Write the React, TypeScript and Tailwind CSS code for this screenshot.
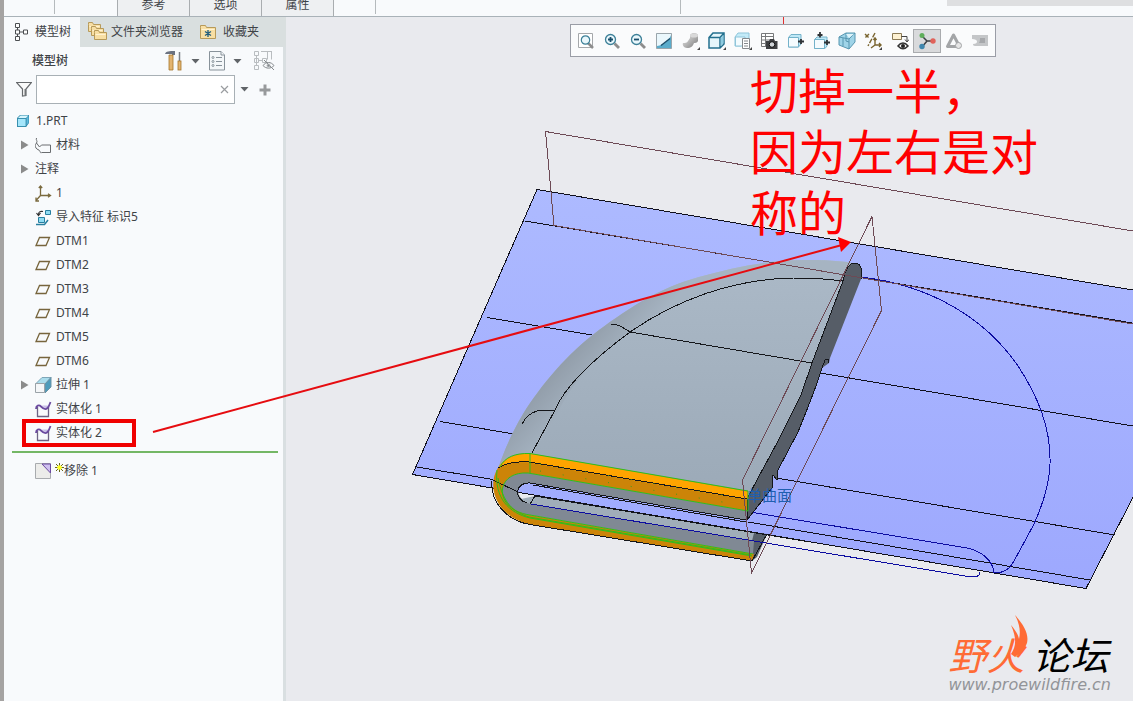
import type { ReactNode } from 'react'

const UI_FONT = "font-['Noto_Sans','Noto_Sans_CJK_SC',sans-serif]"

function PartIcon() {
  return (
    <svg width="14" height="14" viewBox="0 0 14 14">
      <path d="M1 4 4 1h9v8l-3 4H1z" fill="#2b86a8" />
      <path d="M1.500 4.500h8.500v8h-8.500z" fill="#a5e6fb" stroke="#2f86a6" strokeWidth=".8" />
      <path d="M2 4 4.500 1.500h8L10 4z" fill="#d6f5fd" />
      <path d="M10.500 4.500 12.500 2v6.500l-2 3z" fill="#5fb9dc" />
    </svg>
  )
}

function MaterialIcon() {
  return (
    <svg width="17" height="17" viewBox="0 0 17 17" fill="none" stroke="#6a6d70">
      <path d="M1.500 1C.5 3 3 4 1.500 6S0 9 1 11s3 1 4 3.500 1 1 2 1h8.500v-7.500H6.500L4.500 10" />
      <path d="M1.500 6 4.500 10" />
    </svg>
  )
}

function CsysIcon() {
  return (
    <svg width="17" height="17" viewBox="0 0 17 17" fill="none" stroke="#7a6a3e" strokeWidth="1.3">
      <path d="M5.500 1v9.500H15M5.500 10.500 1 15.500M3.800 3l1.700-2 1.700 2M13 8.800l2.500 1.700-2.500 1.700M1 12.500V16h3" />
    </svg>
  )
}

function ImportIcon() {
  return (
    <svg width="17" height="17" viewBox="0 0 17 17">
      <path d="M10.500 1.500h5v4h-5z" fill="#8fdcf3" stroke="#287fa0" />
      <path d="M3.500 8.500h6v5h-6z" fill="#8fdcf3" stroke="#287fa0" />
      <path d="M1 15.500h8.500L13 11" fill="none" stroke="#287fa0" strokeWidth="1.500" />
      <path d="M8 2.500C5 2 3.500 3 3.500 5.500M1.500 4l2 2.500 2-2.500" fill="none" stroke="#333" strokeWidth="1.200" />
    </svg>
  )
}

function DatumIcon() {
  return (
    <svg width="17" height="17" viewBox="0 0 17 17" fill="none" stroke="#77653d" strokeWidth="1.300">
      <path d="M4.500 4.500h10l-3.500 8H1z" />
    </svg>
  )
}

function ExtrudeIcon() {
  return (
    <svg width="17" height="17" viewBox="0 0 17 17">
      <path d="M.5 7 7 .5h9L10 7z" fill="#a9dcec" stroke="#7fa6b8" />
      <path d="M10 7 16 .5V10l-6 6z" fill="#4c9bbb" stroke="#6d93a6" />
      <path d="M.5 6.500h9v9h-9z" fill="#f4f6f8" stroke="#9aa2a8" />
    </svg>
  )
}

function SolidifyIcon() {
  return (
    <svg width="17" height="17" viewBox="0 0 17 17">
      <path d="M7 4.500h7l-3 3.500z" fill="#c9bfe8" />
      <path d="M2.500 6v9.500h11V6" fill="none" stroke="#6d6384" strokeWidth="1.300" />
      <path d="M1 8C1 4.500 4 3.500 6 5.500S10 9 12 7.500 14.500 4 15.500 1" fill="none" stroke="#6b4aa0" strokeWidth="1.800" />
    </svg>
  )
}

function RemoveIcon() {
  return (
    <svg width="17" height="17" viewBox="0 0 17 17">
      <path d="M.5.5h15v15H.5z" fill="#ececea" stroke="#a8abae" />
      <path d="M7 1h8.500v9z" fill="#cfc0f0" stroke="#6b4aa0" />
    </svg>
  )
}

type TreeNode = { id: string; label: string; icon?: ReactNode; expandable?: boolean; marked?: boolean }

const NODES: TreeNode[] = [
  { id: 'material', label: '材料', icon: <MaterialIcon />, expandable: true },
  { id: 'notes', label: '注释', expandable: true },
  { id: 'csys', label: '1', icon: <CsysIcon /> },
  { id: 'import', label: '导入特征 标识5', icon: <ImportIcon /> },
  { id: 'dtm1', label: 'DTM1', icon: <DatumIcon /> },
  { id: 'dtm2', label: 'DTM2', icon: <DatumIcon /> },
  { id: 'dtm3', label: 'DTM3', icon: <DatumIcon /> },
  { id: 'dtm4', label: 'DTM4', icon: <DatumIcon /> },
  { id: 'dtm5', label: 'DTM5', icon: <DatumIcon /> },
  { id: 'dtm6', label: 'DTM6', icon: <DatumIcon /> },
  { id: 'extrude', label: '拉伸 1', icon: <ExtrudeIcon />, expandable: true },
  { id: 'solid1', label: '实体化 1', icon: <SolidifyIcon /> },
  { id: 'solid2', label: '实体化 2', icon: <SolidifyIcon />, marked: true },
]

function TreeRow({ node }: { node: TreeNode }) {
  return (
    <li className="relative flex h-6 items-center pl-[15px]">
      <span className="flex w-4 shrink-0">
        {node.expandable && (
          <button aria-label="展开" className="ml-0.5">
            <svg width="8" height="10" viewBox="0 0 8 10"><path d="M0 0.500 7.500 5 0 9.500z" fill="#8b8b8b" /></svg>
          </button>
        )}
      </span>
      {node.icon && <span className="mr-1 w-[17px] shrink-0">{node.icon}</span>}
      {node.label}
      {node.marked && <span className="absolute -top-0.5 left-[18px] h-7 w-[114px] border-4 border-[#f00000]" />}
    </li>
  )
}

function Caret() {
  return <svg width="9" height="5" viewBox="0 0 9 5"><path d="M0.500 0h8L4.500 4.500z" fill="#606468" /></svg>
}

function Folder({ x, y, w = 12, h = 9 }: { x: number; y: number; w?: number; h?: number }) {
  return (
    <g transform={`translate(${x} ${y})`} stroke="#b79a5a" fill="#f8dfa4">
      <path d={`M.5 2.500V.5h${w / 3}l1 2h${w - w / 3 - 1}v${h - 2}H.5z`} />
      <path d={`M1.500 4h${w - 2}v1h-${w - 2}z`} fill="#fff3d2" stroke="none" />
    </g>
  )
}

function Sidebar() {
  return (
    <aside className="flex w-[282px] shrink-0 flex-col border-r-[3px] border-[#d9dfe1] bg-[#f8fafc]">
      <div className="-mr-[3px] flex h-[30px] bg-[#d9dfdf]" role="tablist">
        <button role="tab" aria-selected="true" className="flex w-[76px] items-center gap-1 bg-[#f8fafc] pl-2.5">
          <svg width="17" height="20" viewBox="0 0 17 20" fill="#fff" stroke="#4c4f52">
            <path d="M3.500 6v8M6 10h5" />
            <path d="M1.500 1.500h4v4h-4zM1.500 8h4v4h-4zM1.500 14.500h4v4h-4zM9.500 8h4v4h-4z" />
          </svg>
          模型树
        </button>
        <button role="tab" aria-selected="false" className="flex items-center gap-1 pl-2">
          <svg width="19" height="20" viewBox="0 0 19 20">
            <Folder x={0} y={0} />
            <Folder x={3} y={4} />
            <Folder x={6} y={8} />
          </svg>
          文件夹浏览器
        </button>
        <button role="tab" aria-selected="false" className="flex items-center gap-1.5 pl-[17px]">
          <svg width="17" height="16" viewBox="0 0 17 16">
            <Folder x={0} y={1} w={15} h={13} />
            <path d="M8 6v7M5 7.500l6 4M11 7.500l-6 4" fill="none" stroke="#1e5c7c" strokeWidth="1.300" />
          </svg>
          收藏夹
        </button>
      </div>

      <div className="flex h-7 items-center pl-7">
        <h2 className="grow font-medium">模型树</h2>
        <button aria-label="设置" className="mr-2">
          <svg width="18" height="20" viewBox="0 0 18 20">
            <path d="M0 3C1 0 4 0 10 0v4H7V3H3z" fill="#6b7280" />
            <path d="M4 4h4v15H4z" fill="#e3b470" stroke="#a6762c" strokeWidth=".8" />
            <path d="M14.500 1v10" stroke="#7a7f85" strokeWidth="1.500" />
            <rect x="13" y="10" width="3" height="9" fill="#e3b470" stroke="#a6762c" strokeWidth=".8" />
          </svg>
        </button>
        <button aria-label="设置选项" className="mr-2"><Caret /></button>
        <button aria-label="显示" className="mr-2">
          <svg width="17" height="20" viewBox="0 0 17 20" fill="#f4f7f9" stroke="#88929a">
            <path d="M1.500.5H13L16.500 4v15h-15z" />
            <path d="M13 .5V4h3.500" />
            <path d="M8 6.500h6M8 10.500h6M8 14.500h6" />
            <circle cx="5" cy="6.500" r="1" /><circle cx="5" cy="10.500" r="1" /><circle cx="5" cy="14.500" r="1" />
          </svg>
        </button>
        <button aria-label="显示选项" className="mr-3"><Caret /></button>
        <button aria-label="隐藏" className="mr-2">
          <svg width="21" height="20" viewBox="0 0 21 20" fill="none" stroke="#b9bdc0">
            <path d="M.5.5h4v4h-4zM.5 7.500h4v4h-4zM.5 14.500h4v4h-4zM8.500 7.500h4v4h-4zM2.500 5v10M5 9.500h4M7 .5h11M13.500.5v8M17.500.5v8" />
            <path d="M9 14.500c3-4 8-4 11 0-3 3.500-8 3.500-11 0zM10 9l10 10" stroke="#85898c" />
            <circle cx="14.500" cy="14.500" r="1.500" fill="#85898c" />
          </svg>
        </button>
      </div>

      <div className="flex items-center pl-3">
        <svg width="16" height="15" viewBox="0 0 16 15" className="mr-1">
          <path d="M.5.5h15L10 7v6.500L6.500 14V7z" fill="#fafafa" stroke="#66696c" strokeWidth="1.200" />
          <path d="M8.500 7h1.500v6.500H8.500z" fill="#6f7275" />
        </svg>
        <div className="flex h-[29px] w-[199px] items-center border border-[#a8b0b5] bg-white pr-[5px]">
          <input aria-label="过滤" className="min-w-0 grow bg-transparent px-2 outline-none" />
          <button aria-label="清除">
            <svg width="9" height="9" viewBox="0 0 9 9"><path d="M1 1l7 7M8 1 1 8" stroke="#9a9da0" strokeWidth="1.200" /></svg>
          </button>
        </div>
        <button aria-label="过滤选项" className="ml-[5px]"><Caret /></button>
        <button aria-label="添加" className="ml-2.5">
          <svg width="12" height="12" viewBox="0 0 12 12"><path d="M6 .5v11M.5 6h11" stroke="#97999b" strokeWidth="3" /></svg>
        </button>
      </div>

      <ul className="pt-[5px]">
        <li className="flex h-6 items-center gap-1.5 pl-3">
          <PartIcon />
          1.PRT
        </li>
        {NODES.map((n) => <TreeRow key={n.id} node={n} />)}
      </ul>
      <div className="mt-1.5 mr-[5px] mb-1.5 ml-2 h-0.5 bg-[#74b765]" />
      <div className="flex h-6 items-center pl-[31px]">
        <RemoveIcon />
        <svg width="9" height="9" viewBox="0 0 9 9" className="mb-2 ml-[3px]">
          <path d="M4.500 0v9M0 4.500h9M1 1l7 7M8 1 1 8" stroke="#66661c" />
          <circle cx="4.500" cy="4.500" r="2.300" fill="#ffff20" />
        </svg>
        移除 1
      </div>
    </aside>
  )
}

function Lens({ children }: { children?: ReactNode }) {
  return (
    <>
      <path d="M11.500 11.500 16 16" stroke="#8d8d8d" strokeWidth="2.800" />
      <circle cx="7.500" cy="7.500" r="5" fill="#e9f7fc" stroke="#3d8098" strokeWidth="1.300" />
      {children}
    </>
  )
}

const Corner = () => <path d="M18 15v3h-3z" fill="#444" />

const TOOLS: { name: string; art: ReactNode; active?: boolean }[] = [
  { name: '重新调整', art: <><path d="M1.500 1.500h14v14h-14z" fill="#fff" stroke="#a5a8ab" /><path d="m11 11 5 5" stroke="#8d8d8d" strokeWidth="2.500" /><circle cx="8.500" cy="8" r="4.200" fill="#e9f7fc" stroke="#3d8098" strokeWidth="1.200" /></> },
  { name: '放大', art: <Lens><path d="M7.500 5v5M5 7.500h5" stroke="#1a4f6b" strokeWidth="1.800" /></Lens> },
  { name: '缩小', art: <Lens><path d="M5 7.500h5" stroke="#1a4f6b" strokeWidth="1.800" /></Lens> },
  { name: '重画', art: <><path d="M1.500 1.500h15v15h-15z" fill="#5aaccb" stroke="#9aa5ab" /><path d="M2 2h14v1C15 7 9 13 2 14z" fill="#eaf7fc" /><path d="M6 13.500 15 6.500" stroke="#1c4f6b" strokeWidth="1.500" /></> },
  { name: '渲染', art: <><path d="M8 6V3c2-3 7-2 8 0v6c-1 2-3 2-4 2-1 3-3 5-7 5-3 0-5-3-4-5 2 0 4 0 5-2" fill="url(#metal)" /><ellipse cx="12" cy="3.500" rx="4" ry="2" fill="#d9d9d9" /><Corner /></> },
  { name: '显示样式', art: <><path d="M1 5.500 5 1h11v11l-4 4H1zM1 5.500h11V16M12 5.500 16 1" fill="#e5f6fb" stroke="#23708e" strokeWidth="1.500" /><path d="M12.700 6 15.500 3v8l-2.800 3z" fill="#8dcbe0" /><Corner /></> },
  { name: '已保存方向', art: <><path d="M1 5 4 1h11v6L7 14H1z" fill="#c4ebf8" stroke="#8fc5da" /><path d="M1.500 5h9.500v9h-9.500z" fill="#f3fbfe" stroke="#8fc5da" /><path d="M8.500 6.500h7v10h-7z" fill="#fff" stroke="#85898c" /><path d="M10 9h4M10 11.500h4M10 14h4" stroke="#85898c" /><Corner /></> },
  { name: '视图管理器', art: <><path d="M1.500 1.500h12v13h-12zM1.500 4.500h12M1.500 8h12M1.500 11.500h12M5.500 1.500v13" fill="#fff" stroke="#77797b" /><path d="M6 9h3l1-2h4l1 2h2.500v8H6z" fill="#3d3f42" /><circle cx="12" cy="12.500" r="2.800" fill="#d0d4d8" stroke="#111" /></> },
  { name: '视图法向', art: <><path d="M2.500 5.500 5 2.500h10V12l-2.500 3h-10z" fill="#bfe8f6" stroke="#74b2ca" /><path d="M2.500 5.500h10V15h-10z" fill="#f5fbfe" stroke="#74b2ca" /><path d="M12 9.500h6M15 7v5" fill="none" stroke="#2f3337" strokeWidth="1.800" /></> },
  { name: '定向', art: <><path d="M2.500 7.500 5 5h10v9l-2 2.500H2.500z" fill="#bfe8f6" stroke="#74b2ca" /><path d="M2.500 7.500h10v9h-10z" fill="#f5fbfe" stroke="#74b2ca" /><path d="M12 10.500h6M15 8v5M8 0v5.500M5.500 3h5" fill="none" stroke="#2f3337" strokeWidth="1.800" /></> },
  { name: '透视图', art: <><path d="M1 5 8 1h9v9l-6 7-10-4z" fill="#9fd4e8" stroke="#5796b0" /><path d="M1 5 11 7v10M11 7l6-6M5 6v8M8 1v8l3 1" fill="none" stroke="#5796b0" /><path d="M8 2h8l-5 4z" fill="#dff4fb" /></> },
  { name: '基准显示', art: <><path d="m1 2 4 4M5 2 1 6M11 1 4 14" stroke="#7a6530" strokeWidth="1.400" strokeDasharray="5 1.500" fill="none" /><path d="M11 6v7h6M11 13l-4 3M9.500 8 11 6l1.500 2M15 11l2 2-2 2" fill="none" stroke="#7a6530" strokeWidth="1.400" /><Corner /></> },
  { name: '注释显示', art: <><path d="M1.500 1.500h9v6h-9z" fill="#fdf1d2" stroke="#8b7a55" /><path d="M10.500 4.500H16v5M14 7.500l2 2.500 2-2.500" fill="none" stroke="#444" /><path d="M7 14c3-4 7-4 10 0-3 3.500-7 3.500-10 0z" fill="#fff" stroke="#333" strokeWidth="1.500" /><circle cx="12" cy="14" r="2" fill="#222" /></> },
  { name: '旋转中心', active: true, art: <><path d="M4 4l5 5h6M9 9l-5 6" fill="none" stroke="#3c4044" strokeWidth="1.500" /><circle cx="4" cy="3.500" r="2.500" fill="#5fae5b" /><circle cx="15" cy="9" r="2.700" fill="#e0625a" /><circle cx="4" cy="14.500" r="2.700" fill="#3f86ad" /></> },
  { name: '动画', art: <><path d="M8.500 3 2.500 14.500h12z" fill="none" stroke="#a3a5a7" strokeWidth="3" strokeLinejoin="round" /><circle cx="13.500" cy="13.500" r="3" fill="#e6e6e6" stroke="#a3a5a7" /></> },
  { name: '停止', art: <><path d="M1 3h16v11H4c-1.500 0-2-1-2-2 3 0 4-1 4-2.500S4 7 1 7z" fill="#c4c6c8" /><path d="M9 6h5v5H8c1-2 1-3 1-5z" fill="#a6a8ab" /></> },
]

function GraphicsToolbar() {
  return (
    <div role="toolbar" className="absolute top-[7px] left-[284px] flex h-[33px] w-[426px] items-center border border-[#9a9da6] bg-[#fafbfc] px-0.5">
      {TOOLS.map((t) => (
        <button
          key={t.name}
          aria-label={t.name}
          className={t.active ? 'flex h-6 flex-1 items-center justify-center border border-[#a9abae] bg-[#d9dadc]' : 'flex h-6 flex-1 items-center justify-center'}
        >
          <svg width="18" height="18" viewBox="0 0 18 18" className="shrink-0" fill="none">{t.art}</svg>
        </button>
      ))}
    </div>
  )
}

function Model() {
  return (
    <svg viewBox="286 17 847 684" className="pointer-events-none absolute top-0 left-0 h-[684px] w-[847px] overflow-visible" fill="none">
      <defs>
        <linearGradient id="sheet" x1="0" y1="0" x2="0" y2="1">
          <stop offset="0" stopColor="#adbaff" />
          <stop offset="1" stopColor="#9da8fe" />
        </linearGradient>
        <linearGradient id="skin" x1="0" y1="0" x2="0" y2="1">
          <stop offset="0" stopColor="#abb9c7" />
          <stop offset="1" stopColor="#9ba9b7" />
        </linearGradient>
        <linearGradient id="roll" gradientUnits="userSpaceOnUse" x1="560" y1="350" x2="600" y2="385">
          <stop offset="0" stopColor="#8e99a5" />
          <stop offset="1" stopColor="#a6b4c2" />
        </linearGradient>
        <linearGradient id="metal" x1="0" y1="0" x2="1" y2="1">
          <stop offset="0" stopColor="#ececec" />
          <stop offset=".5" stopColor="#b5b5b5" />
          <stop offset="1" stopColor="#777" />
        </linearGradient>
      </defs>

      <path d="M783 17h1v7h-1z" fill="#e03030" />

      {/* datum sheet */}
      <path d="M537 189.500 1180 298v108l-94 182.500L412.500 474.500z" fill="url(#sheet)" stroke="#10101c" shapeRendering="crispEdges" />
      <g stroke="#10101c" shapeRendering="crispEdges">
        <path d="M525 221 1180 331M487 317.500 598 336M820 373l360 61M440 421.500l77 13M776 478l339 57M417 467l76 12.500M748 522l342 58" />
      </g>

      {/* sketch curves on the sheet */}
      <g stroke="#0c0ca0" shapeRendering="crispEdges">
        <path d="M861 277C930 285 985 318 1018 366c24 36 33 68 32 98-1 24-9 45-17 62l-19 35c-5 9-10 12-21 12" />
        <path d="M747 511.500 967 548c14 3 26 12 27 25" />
      </g>

      {/* upper shell */}
      <path d="M496 474c7-20 14-38 27-60 18-29 45-61 76-84 30-22 60-42 100-53 36-10 70-17 106-17 22 0 42 1 50 4l6 12-6 12-108 219-220-36z" fill="url(#skin)" />
      <path d="M496 474c7-20 14-38 27-60 18-29 45-61 76-84 30-22 60-42 100-53 36-10 70-17 106-17 22 0 42 1 50 4l-12 17c-20-2-38-4-50-3-60 3-117 19-163 54-44 30-62 59-76 88l-22 34z" fill="url(#roll)" />
      <g stroke="#14161a" shapeRendering="crispEdges">
        <path d="M532 453l23-43c10-24 36-49 75-78 46-32 103-53 163-54 18 0 35 1 50 3" />
        <path d="M611 324.500c8-1 13 4 19 7.500l182 31M522 424c8-15 20-15 33-13" />
      </g>

      {/* cut face */}
      <path d="M843 281c2-10 6-18 12-18s8 8 6 16l-31 79-1 5-7 5c-6 20-15 42-24 64l-20 38-1 10-4-5-1 13-25 32v-21l11-21 19-35 24-48 11-32z" fill="#565d67" />
      <g stroke="#14161a" shapeRendering="crispEdges">
        <path d="M747 499l11-21 19-35 24-48 11-32 31-82c2-10 6-18 12-18s8 8 6 16M822 368l3-8q4-3 4 3M822 368c-6 20-15 42-24 64l-20 38-1 10-4-5-1 13-25 32" />
      </g>
      <path d="M754 533l13 1-10 23-5 4-4-20z" fill="#565f69" />

      {/* front profile with the slot left open */}
      <path d="M528 473c-34-2-35 37 2 42l223 39 1-13-222-37c-18-4-18-22-2-21l216 37 2-9z" fill="#808994" />
      <path d="M535 496 754 533l-2 8-221-37c-4-1-8-3-10-5z" fill="#a0adb9" />
      <path d="M530 453.500c-48-2-50 60 0 71L752 561l2-7-224-39c-36-6-36-44-2-42l220 38v-20z" fill="#cc8408" />
      <path d="M530 453.500c-16 0-27 5-32 15 8-5 18-7 31-6l218 37 1-8z" fill="#ffa400" />
      <g stroke="#14161a" shapeRendering="crispEdges">
        <path d="M498 468c8-5 18-7 31-6l218 37v21M530 483l216 37M533 485l213 37M530 483c-15-1-17 16-3 20M535 496l275 46M493 480l25 12M535 496l-5 8M492 481c-2 22 16 40 38 43.500L752 561l15-27" />
      </g>
      <path d="M531 504 965 576c9 2 15 1 15-4" stroke="#0c0ca0" shapeRendering="crispEdges" />
      <g stroke="#2fbe1c">
        <path d="M500 467c5-10 15-14 30-13.500L748 491v20M528 473l220 38M528 473c-34-2-35 37 2 42l223 39M530 453.500v20M497 470c-3 28 12 43 33 48l222 38M498 478c5 25 15 34 31 39l222 38" />
      </g>
      <path d="M540 464l200 34M540 471l200 34" stroke="#3d9c1e" strokeDasharray="1 22" />

      {/* datum plane borders */}
      <g stroke="#6d4a55" shapeRendering="crispEdges">
        <path d="M1133 231 545.500 131.500 554 225.500 1180 332" />
        <path d="M872 216.500 881.500 310.500 751.500 573 742.500 480z" />
      </g>

      {/* callout arrow */}
      <path d="M153 432 842 245" stroke="#e60c10" strokeWidth="2" />
      <path d="M838 237l13 5-10 10z" fill="#ff0000" />
    </svg>
  )
}

function ForumMark() {
  return (
    <a href="#forum" className="absolute right-[22px] bottom-2 italic">
      <span className="flex items-center gap-2 font-['Noto_Sans_CJK_SC',sans-serif] text-[38px] leading-[46px] text-black">
        <span className="relative text-[#ff6b35]">
          野火
          <svg width="18" height="42" viewBox="0 0 18 42" className="absolute -top-4 -right-1">
            <path d="M5 0c9 10 14 19 12 28-2 6-6 10-12 14l-4-3c5-8 6-15 0-29 4 5 7 9 8 14C11 16 9 8 5 0z" fill="#ff6b35" />
          </svg>
        </span>
        论坛
      </span>
      <span className="block font-['DejaVu_Sans',sans-serif] text-base leading-4 text-[#929498]">www.proewildfire.cn</span>
    </a>
  )
}

export default function App() {
  return (
    <div className={`${UI_FONT} flex min-h-screen flex-col overflow-hidden border-l-4 border-[#a5a3a2] bg-[#e9eaee] text-xs text-[#3f4347]`}>
      <header className="flex h-[17px] border-b border-[#a9b2b8] bg-[#f8fafc]">
        <div className="h-3.5 w-[51px] border-r border-[#b5babd]" />
        <nav className="ml-[62px] flex h-4 overflow-hidden border-l border-[#a9adb0] bg-[#eef0f2] leading-[10px]">
          {['参考', '选项', '属性'].map((t) => (
            <button key={t} className="flex w-[72px] items-start justify-center border-r border-[#a9adb0]">{t}</button>
          ))}
        </nav>
        <div className="h-3.5 w-[42px] border-r border-[#b5babd]" />
        <div className="h-3.5 w-[305px] border-r border-[#b5babd]" />
        <div className="ml-auto h-1.5 w-[186px] bg-[#dedfe1]" />
      </header>

      <div className="flex grow">
        <Sidebar />
        <main className="relative grow">
          <Model />
          <GraphicsToolbar />
          <p className="absolute top-[41px] left-[464px] font-['Noto_Sans_CJK_SC',serif] text-5xl leading-[61px] whitespace-nowrap text-[#ff0000]">
            切掉一半，<br />
            因为左右是对<br />
            称的
          </p>
          <span className="absolute top-[469px] left-[461px] font-['Noto_Sans_CJK_SC',sans-serif] text-[15px] leading-[18px] text-[#1f5fb0]">单曲面</span>
          <ForumMark />
        </main>
      </div>
    </div>
  )
}
